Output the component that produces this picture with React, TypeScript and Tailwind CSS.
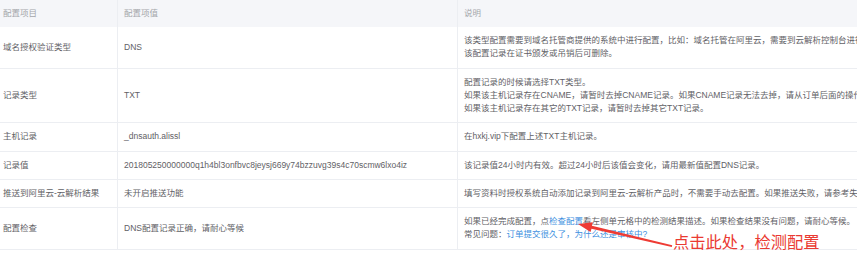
import { Fragment, type ReactNode } from "react";

type Row = {
  name: string;
  value: ReactNode;
  desc: ReactNode[];
};

const link = "text-[#3d8fe0]";

const rows: Row[] = [
  {
    name: "域名授权验证类型",
    value: "DNS",
    desc: [
      "该类型配置需要到域名托管商提供的系统中进行配置，比如：域名托管在阿里云，需要到云解析控制台进行配置。",
      "该配置记录在证书颁发或吊销后可删除。",
    ],
  },
  {
    name: "记录类型",
    value: "TXT",
    desc: [
      "配置记录的时候请选择TXT类型。",
      "如果该主机记录存在CNAME，请暂时去掉CNAME记录。如果CNAME记录无法去掉，请从订单后面的操作中取消订单。",
      "如果该主机记录存在其它的TXT记录，请暂时去掉其它TXT记录。",
    ],
  },
  {
    name: "主机记录",
    value: "_dnsauth.alissl",
    desc: ["在hxkj.vip下配置上述TXT主机记录。"],
  },
  {
    name: "记录值",
    value: "201805250000000q1h4bl3onfbvc8jeysj669y74bzzuvg39s4c70scmw6lxo4iz",
    desc: ["该记录值24小时内有效。超过24小时后该值会变化，请用最新值配置DNS记录。"],
  },
  {
    name: "推送到阿里云-云解析结果",
    value: "未开启推送功能",
    desc: ["填写资料时授权系统自动添加记录到阿里云-云解析产品时，不需要手动去配置。如果推送失败，请参考失败提示手动配置。"],
  },
  {
    name: "配置检查",
    value: "DNS配置记录正确，请耐心等候",
    desc: [
      <>
        如果已经完成配置，点<span className={link}>检查配置</span>
        看左侧单元格中的检测结果描述。如果检查结果没有问题，请耐心等候。
      </>,
      <>
        常见问题：<span className={link}>订单提交很久了，为什么还是审核中?</span>
      </>,
    ],
  },
];

function Cell({ children, className = "" }: { children: ReactNode; className?: string }) {
  return (
    <div className={`flex items-center py-[7px] border-b border-[#eceef2] ${className}`}>
      <div>{children}</div>
    </div>
  );
}

export default function App() {
  return (
    <div
      className="relative w-[857px] h-[255px] overflow-hidden bg-white text-[8.5px] leading-[13.25px] text-[#5f6166]"
      style={{ fontFamily: '"Liberation Sans", "Noto Sans CJK SC", sans-serif' }}
    >
      <div className="grid grid-cols-[118px_340px_600px] w-[1058px]">
        {/* header */}
        <div className="h-[27px] flex items-center pl-[3px] bg-[#f5f6f9] text-[#a4a6ab] border-r border-[#eceef2]">配置项目</div>
        <div className="h-[27px] flex items-center pl-[6px] bg-[#f5f6f9] text-[#a4a6ab] border-r border-[#eceef2]">配置项值</div>
        <div className="h-[27px] flex items-center pl-[6px] bg-[#f5f6f9] text-[#a4a6ab]">说明</div>

        {rows.map((r) => (
          <Fragment key={r.name}>
            <Cell className="pl-[3px] border-r">{r.name}</Cell>
            <Cell className="pl-[6px] border-r">{r.value}</Cell>
            <Cell className="pl-[6px] whitespace-nowrap">
              {r.desc.map((d, i) => (
                <div key={i}>{d}</div>
              ))}
            </Cell>
          </Fragment>
        ))}
      </div>

      {/* annotation arrow + label */}
      <svg className="absolute left-0 top-0 pointer-events-none" width="857" height="255" viewBox="0 0 857 255">
        <polygon
          fill="#ee3b34"
          points="578,224 592.7,222.3 591.9,225.8 672.2,245.3 671.8,247 591.5,228.7 590.5,232.1"
        />
      </svg>
      <div
        className="absolute left-[673px] top-[231px] text-[16.3px] leading-[20px] text-[#ea3a32] whitespace-nowrap"
        style={{ fontFamily: '"Noto Sans CJK SC", sans-serif' }}
      >
        点击此处，检测配置
      </div>
    </div>
  );
}
